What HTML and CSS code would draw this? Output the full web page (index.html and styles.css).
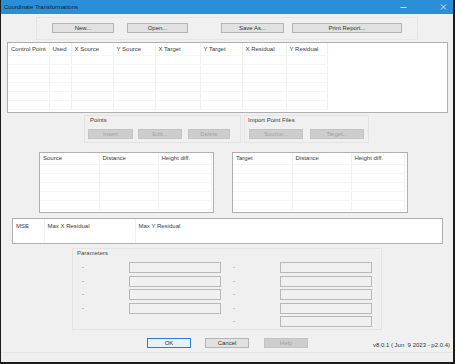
FILE: index.html
```html
<!DOCTYPE html>
<html>
<head>
<meta charset="utf-8">
<title>Coordinate Transformations</title>
<link rel="stylesheet" href="styles.css">
</head>
<body>
<div class="window">
  <div class="titlebar">
    <span class="title">Coordinate Transformations</span>
    <svg class="ic-min" width="7" height="8" viewBox="0 0 7 8"><path d="M0.5 4.5h6" stroke="#cfe7fa" stroke-width="1"/></svg>
    <svg class="ic-close" width="7" height="8" viewBox="0 0 7 8"><path d="M1 1.5l5 5M6 1.5l-5 5" stroke="#cfe7fa" stroke-width="1"/></svg>
  </div>

  <div class="toolbar">
    <button class="btn b-new">New...</button>
    <button class="btn b-open">Open...</button>
    <button class="btn b-save">Save As...</button>
    <button class="btn b-print">Print Report...</button>
  </div>

  <div class="tbl main-tbl">
    <table>
      <colgroup>
        <col class="w41"><col class="w22"><col class="w42"><col class="w42"><col class="w45"><col class="w42"><col class="w44"><col class="w41"><col>
      </colgroup>
      <tr class="hdr"><td>Control Point</td><td>Used</td><td>X Source</td><td>Y Source</td><td>X Target</td><td>Y Target</td><td>X Residual</td><td>Y Residual</td><td class="fill"></td></tr>
      <tr class="row"><td></td><td></td><td></td><td></td><td></td><td></td><td></td><td></td><td class="fill"></td></tr>
      <tr class="row"><td></td><td></td><td></td><td></td><td></td><td></td><td></td><td></td><td class="fill"></td></tr>
      <tr class="row"><td></td><td></td><td></td><td></td><td></td><td></td><td></td><td></td><td class="fill"></td></tr>
      <tr class="row"><td></td><td></td><td></td><td></td><td></td><td></td><td></td><td></td><td class="fill"></td></tr>
      <tr class="row"><td></td><td></td><td></td><td></td><td></td><td></td><td></td><td></td><td class="fill"></td></tr>
      <tr class="row"><td></td><td></td><td></td><td></td><td></td><td></td><td></td><td></td><td class="fill"></td></tr>
      <tr class="last"><td></td><td></td><td></td><td></td><td></td><td></td><td></td><td></td><td class="fill"></td></tr>
    </table>
  </div>

  <div class="groups">
    <div class="grp grp-points">
      <div class="grp-label">Points</div>
      <div class="grp-btns">
        <button class="btn dis b-insert">Insert</button>
        <button class="btn dis b-edit">Edit...</button>
        <button class="btn dis b-delete">Delete</button>
      </div>
    </div>
    <div class="grp grp-import">
      <div class="grp-label">Import Point Files</div>
      <div class="grp-btns">
        <button class="btn dis b-source">Source...</button>
        <button class="btn dis b-target">Target...</button>
      </div>
    </div>
  </div>

  <div class="details">
    <div class="tbl det-tbl det-source">
      <table>
        <colgroup><col class="w59"><col class="w59"><col class="w53"><col></colgroup>
        <tr class="hdr"><td>Source</td><td>Distance</td><td>Height diff.</td><td class="fill"></td></tr>
        <tr class="row"><td></td><td></td><td></td><td class="fill"></td></tr>
        <tr class="row"><td></td><td></td><td></td><td class="fill"></td></tr>
        <tr class="row"><td></td><td></td><td></td><td class="fill"></td></tr>
        <tr class="row"><td></td><td></td><td></td><td class="fill"></td></tr>
        <tr class="row"><td></td><td></td><td></td><td class="fill"></td></tr>
        <tr class="last"><td></td><td></td><td></td><td class="fill"></td></tr>
      </table>
    </div>
    <div class="tbl det-tbl det-target">
      <table>
        <colgroup><col class="w59"><col class="w59"><col class="w53"><col></colgroup>
        <tr class="hdr"><td>Target</td><td>Distance</td><td>Height diff.</td><td class="fill"></td></tr>
        <tr class="row"><td></td><td></td><td></td><td class="fill"></td></tr>
        <tr class="row"><td></td><td></td><td></td><td class="fill"></td></tr>
        <tr class="row"><td></td><td></td><td></td><td class="fill"></td></tr>
        <tr class="row"><td></td><td></td><td></td><td class="fill"></td></tr>
        <tr class="row"><td></td><td></td><td></td><td class="fill"></td></tr>
        <tr class="last"><td></td><td></td><td></td><td class="fill"></td></tr>
      </table>
    </div>
  </div>

  <div class="tbl mse-tbl">
    <table>
      <colgroup><col class="w31"><col class="w91"><col></colgroup>
      <tr class="hdr plain"><td>MSE</td><td>Max X Residual</td><td class="nofill">Max Y Residual</td></tr>
      <tr class="last"><td></td><td></td><td class="nofill"></td></tr>
    </table>
  </div>

  <div class="params">
    <div class="params-label">Parameters</div>
    <div class="params-grid">
      <span class="pl c1">-</span><span class="pbox c2"></span><span class="pl c4">-</span><span class="pbox c5"></span>
      <span class="pl c1">-</span><span class="pbox c2"></span><span class="pl c4">-</span><span class="pbox c5"></span>
      <span class="pl c1">-</span><span class="pbox c2"></span><span class="pl c4">-</span><span class="pbox c5"></span>
      <span class="pl c1">-</span><span class="pbox c2"></span><span class="pl c4">-</span><span class="pbox c5"></span>
      <span class="pl c4">-</span><span class="pbox c5"></span>
    </div>
  </div>

  <div class="footer">
    <button class="btn def b-ok">OK</button>
    <button class="btn b-cancel">Cancel</button>
    <button class="btn dis b-help">Help</button>
    <span class="version">v8.0.1 ( Jun&nbsp; 9 2023 - p2.0.4)</span>
  </div>
  <div class="statusline"></div>
</div>
</body>
</html>
```

FILE: styles.css
```css
* { box-sizing: border-box; margin: 0; padding: 0; }

body {
  margin: 0;
  background: #ffffff;
  font-family: "Liberation Sans", Arial, sans-serif;
  font-size: 6px;
  color: #333333;
}

.window {
  width: 455px;
  height: 364px;
  background: #f0f0f0;
  border-left: 1px solid #1c1c1c;
  border-right: 2px solid #1c1c1c;
  border-bottom: 2px solid #1c1c1c;
  display: flex;
  flex-direction: column;
}

/* title bar */
.titlebar {
  flex: none;
  height: 14px;
  background: #2a8fd7;
  display: flex;
  align-items: center;
  padding-left: 3px;
}
.title { flex: 1; color: #0d2236; font-size: 6px; }
.ic-min { margin-right: 33px; }
.ic-close { margin-right: 6px; }

/* buttons */
.btn {
  font-family: "Liberation Sans", Arial, sans-serif;
  font-size: 6px;
  color: #333333;
  height: 10px;
  line-height: 8px;
  background: #e1e1e1;
  border: 1px solid #b4b4b4;
  text-align: center;
  flex: none;
}
.btn.dis { background: #cdcdcd; border-color: #c4c4c4; color: #a3a3a3; }
.btn.def { border-color: #2a7fd0; background: #e5f1fb; }

/* toolbar */
.toolbar {
  flex: none;
  display: flex;
  align-items: flex-start;
  margin: 3px 0 0 35px;
  width: 382px;
  height: 23px;
  border: 1px solid #e6e6e6;
  padding-top: 5px;
}
.b-new { margin-left: 15px; width: 62px; }
.b-open { margin-left: 13px; width: 61px; }
.b-save { margin-left: 33px; width: 63px; }
.b-print { margin-left: 8px; width: 110px; }

/* tables */
.tbl {
  flex: none;
  background: #ffffff;
  border: 1px solid #b0b0b0;
  overflow: hidden;
}
.tbl table {
  width: 100%;
  border-collapse: collapse;
  table-layout: fixed;
}
.tbl td {
  padding: 0 0 0 3px;
  border-right: 1px solid #f0f0f0;
  border-bottom: 1px solid #f5f5f5;
  white-space: nowrap;
  overflow: hidden;
  color: #3a3a3a;
  vertical-align: middle;
}
.tbl td.fill { border: none; }
.tbl td.nofill { border-right: none; }
.tbl tr.plain td { border-bottom: none; }
.tbl tr.last td { border-bottom: none; }
.tbl tr.row td { height: 9px; }

.w22 { width: 22px; }
.w31 { width: 31px; }
.w41 { width: 41px; }
.w42 { width: 42px; }
.w44 { width: 44px; }
.w45 { width: 45px; }
.w53 { width: 53px; }
.w59 { width: 59px; }
.w91 { width: 91px; }

.main-tbl { margin: 2px 0 0 6px; width: 441px; height: 71px; }
.main-tbl tr.hdr td { height: 12px; }

/* groups */
.groups {
  flex: none;
  display: flex;
  margin-top: 2px;
  height: 28px;
}
.grp {
  border: 1px solid #e4e4e4;
  height: 28px;
}
.grp-label { height: 8px; line-height: 8px; color: #3a3a3a; }
.grp-btns { display: flex; margin-top: 5px; }
.grp-points { margin-left: 83px; width: 157px; }
.grp-points .grp-label { padding-left: 5px; }
.grp-import { margin-left: 3px; width: 125px; }
.grp-import .grp-label { padding-left: 3px; }
.b-insert { margin-left: 3px; width: 45px; }
.b-edit { margin-left: 5px; width: 44px; }
.b-delete { margin-left: 6px; width: 42px; }
.b-source { margin-left: 4px; width: 54px; }
.b-target { margin-left: 7px; width: 54px; }

/* detail tables */
.details {
  flex: none;
  display: flex;
  margin-top: 9px;
  height: 61px;
}
.det-tbl { height: 61px; }
.det-tbl tr.hdr td { height: 11px; }
.det-source { margin-left: 38px; width: 175px; }
.det-target { margin-left: 18px; width: 176px; }

/* MSE */
.mse-tbl { margin: 5px 0 0 11px; width: 431px; height: 26px; }
.mse-tbl tr.hdr td { height: 13px; }
.mse-tbl tr.last td { height: 11px; }

/* parameters */
.params {
  flex: none;
  margin: 4px 0 0 71px;
  width: 310px;
  height: 82px;
  border: 1px solid #e4e4e4;
}
.params-label { padding: 1px 0 0 4px; height: 13px; line-height: 7px; color: #4a4a4a; }
.params-grid {
  display: grid;
  grid-template-columns: 9px 47px 92px 12px 47px 92px;
  grid-auto-rows: 11px;
  row-gap: 2.5px;
}
.pl { color: #666; line-height: 11px; }
.c1 { grid-column: 2; }
.c2 { grid-column: 3; }
.c4 { grid-column: 5; }
.c5 { grid-column: 6; }
.pbox { border: 1px solid #b8b8b8; background: #f0f0f0; }

/* footer */
.footer {
  flex: none;
  display: flex;
  align-items: flex-start;
  margin-top: 8px;
  height: 10px;
}
.b-ok { margin-left: 146px; width: 44px; }
.b-cancel { margin-left: 14px; width: 44px; }
.b-help { margin-left: 15px; width: 44px; }
.version { margin-left: auto; margin-right: 3px; margin-top: 3px; color: #333; font-size: 6px; line-height: 8px; }

.statusline {
  flex: 1;
  margin-top: 4px;
  border-top: 1px solid #e4e4e4;
  background: #f0f0f0;
}
```
